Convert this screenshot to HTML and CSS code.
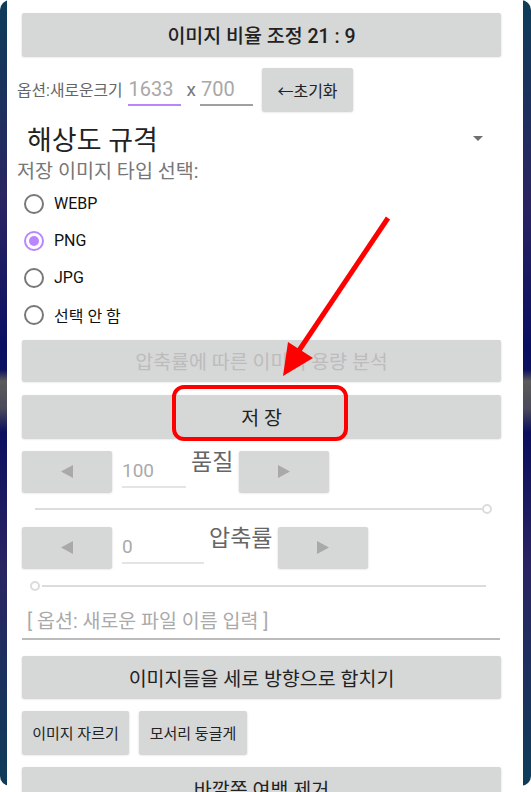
FILE: index.html
```html
<!DOCTYPE html>
<html>
  <head>
    <title>이미지 저장</title>
    <link rel="stylesheet" href="styles.css">
  </head>
  <body>
    <div class="screen">
      <div class="dialog">
        <div class="btn wide title-btn">이미지 비율 조정 21 : 9</div>

        <div class="size-row">
          <span class="size-label">옵션:새로운크기</span>
          <span class="field field-w">1633</span>
          <span class="times">x</span>
          <span class="field field-h">700</span>
          <span class="btn reset-btn">←초기화</span>
        </div>

        <div class="spinner">
          <span>해상도 규격</span>
          <svg width="10" height="5" viewBox="0 0 10 5"><polygon points="0,0 10,0 5,5" fill="#6f6f6f"/></svg>
        </div>

        <div class="type-label">저장 이미지 타입 선택:</div>
        <div class="radio-group">
          <div class="radio"><span class="circle"></span><span>WEBP</span></div>
          <div class="radio"><span class="circle checked"></span><span>PNG</span></div>
          <div class="radio"><span class="circle"></span><span>JPG</span></div>
          <div class="radio"><span class="circle"></span><span>선택 안 함</span></div>
        </div>

        <div class="btn wide analyze">압축률에 따른 이미지 용량 분석</div>
        <div class="btn wide save">저 장</div>

        <div class="step-row">
          <span class="btn step"><svg width="12" height="13" viewBox="0 0 12 13"><polygon points="12,0 12,13 0,6.5" fill="#a9a9a9"/></svg></span>
          <span class="step-value">100</span>
          <span class="step-label">품질</span>
          <span class="btn step"><svg width="12" height="13" viewBox="0 0 12 13"><polygon points="0,0 0,13 12,6.5" fill="#a9a9a9"/></svg></span>
        </div>
        <div class="slider slider-max"><span class="track"></span><span class="thumb"></span></div>

        <div class="step-row compress">
          <span class="btn step"><svg width="12" height="13" viewBox="0 0 12 13"><polygon points="12,0 12,13 0,6.5" fill="#a9a9a9"/></svg></span>
          <span class="step-value wide-value">0</span>
          <span class="step-label">압축률</span>
          <span class="btn step"><svg width="12" height="13" viewBox="0 0 12 13"><polygon points="0,0 0,13 12,6.5" fill="#a9a9a9"/></svg></span>
        </div>
        <div class="slider slider-min"><span class="thumb"></span><span class="track"></span></div>

        <div class="name-field">[ 옵션: 새로운 파일 이름 입력 ]</div>

        <div class="btn wide merge">이미지들을 세로 방향으로 합치기</div>
        <div class="small-row">
          <span class="btn small">이미지 자르기</span>
          <span class="btn small">모서리 둥글게</span>
        </div>
        <div class="btn wide last">바깥쪽 여백 제거</div>
      </div>
    </div>

    <!-- red annotation over the save button -->
    <svg class="annotation" width="531" height="792" viewBox="0 0 531 792">
      <line x1="388" y1="218" x2="298" y2="352" stroke="#ff0000" stroke-width="5"/>
      <polygon points="283,376 288,342 313,358" fill="#ff0000"/>
      <rect x="174" y="387" width="172" height="52" rx="10" fill="none" stroke="#ff0000" stroke-width="4"/>
    </svg>
  </body>
</html>
```

FILE: styles.css
```css
html,
body {
  margin: 0;
  height: 792px;
  overflow: hidden;
  background-color: #fff;
}

body {
  font-family: Roboto, "Noto Sans CJK KR", sans-serif;
  position: relative;
}

.screen {
  position: relative;
  height: 786px;
  border-radius: 10px;
  background: linear-gradient(180deg, #0e3d58 0%, #2a2462 26%, #0a0f62 44%, #0b1060 47%, #5b5b5b 48.5%, #4a4a5a 52%, #0b0f5e 55%, #2a2463 72%, #0e3d58 100%);
}

.dialog {
  position: relative;
  margin: 0 8px 0 7px;
  min-height: 820px;
  padding: 13px 17px 0 10px;
  background-color: #fff;
  display: flex;
  flex-direction: column;
}

.btn {
  display: flex;
  align-items: center;
  justify-content: center;
  background-color: #d6d7d7;
  border-radius: 2px;
  box-shadow: 0 1px 2px rgba(0, 0, 0, 0.22);
  color: #222;
  font-size: 19.5px;
}

.wide {
  flex: none;
  height: 43px;
  margin: 0 5px;
}

.title-btn {
  font-weight: 500;
}

.size-row {
  display: flex;
  align-items: center;
  height: 43px;
  margin-top: 12px;
}

.size-label {
  font-size: 15.8px;
  color: #666;
}

.field {
  box-sizing: border-box;
  width: 53px;
  height: 32px;
  line-height: 30px;
  padding-left: 1px;
  font-size: 20px;
  color: #a8a8a8;
  border-bottom: 2px solid #a0a0a0;
}

.field-w {
  margin-left: 5px;
  border-bottom-color: #bb86fc;
}

.times {
  margin-left: 6px;
  font-size: 19px;
  color: #777;
}

.field-h {
  margin-left: 4px;
}

.reset-btn {
  margin-left: 9px;
  width: 91px;
  height: 43px;
  font-size: 16px;
}

.spinner {
  display: flex;
  align-items: center;
  justify-content: space-between;
  height: 44px;
  margin-top: 5px;
  padding: 0 23px 0 10px;
  font-size: 27px;
  color: #222;
}

.type-label {
  font-size: 19.6px;
  line-height: 24px;
  color: #777;
}

.radio-group {
  margin-top: 1px;
}

.radio {
  display: flex;
  align-items: center;
  height: 37px;
  font-size: 16px;
  color: #111;
}

.circle {
  box-sizing: border-box;
  width: 20px;
  height: 20px;
  margin: 0 10px 0 7px;
  border: 2px solid #787878;
  border-radius: 50%;
  display: flex;
  align-items: center;
  justify-content: center;
}

.circle.checked {
  border-color: #bb86fc;
}

.circle.checked::after {
  content: "";
  width: 10px;
  height: 10px;
  border-radius: 50%;
  background-color: #bb86fc;
}

.analyze {
  margin-top: 7px;
  height: 41px;
  color: #bcbcbc;
}

.save {
  margin-top: 14px;
}

.step-row {
  display: flex;
  align-items: flex-start;
  height: 41px;
  margin: 13px 0 0 5px;
}

.step-row.compress {
  margin-top: 10px;
}

.step {
  width: 90px;
  height: 41px;
}

.step-value {
  box-sizing: border-box;
  width: 64px;
  height: 37px;
  margin-left: 10px;
  padding-top: 4px;
  line-height: 32px;
  font-size: 19px;
  color: #aaa;
  border-bottom: 2px solid #e4e4e4;
}

.step-value.wide-value {
  width: 82px;
}

.step-label {
  margin: 0 6px 0 5px;
  line-height: 24px;
  font-size: 23px;
  color: #666;
}

.slider {
  display: flex;
  align-items: center;
  height: 16px;
}

.slider-max {
  margin: 9px 14px 0 18px;
}

.slider-min {
  margin: 10px 20px 0 13px;
}

.track {
  flex: 1;
  height: 2px;
  background-color: #dcdcdc;
}

.thumb {
  box-sizing: border-box;
  width: 10px;
  height: 10px;
  border: 2px solid #dcdcdc;
  border-radius: 50%;
}

.slider-min .thumb {
  margin-right: 2px;
}

.name-field {
  box-sizing: border-box;
  height: 34px;
  margin: 12px 6px 0 5px;
  padding-left: 5px;
  line-height: 32px;
  font-size: 19.5px;
  color: #aaa;
  border-bottom: 2px solid #bbb;
}

.merge {
  margin-top: 16px;
  height: 42px;
}

.small-row {
  display: flex;
  gap: 10px;
  margin: 13px 5px 0;
}

.small {
  width: 107px;
  height: 43px;
  font-size: 15px;
}

.small + .small {
  width: 108px;
}

.last {
  margin-top: 13px;
}

.annotation {
  position: absolute;
  top: 0;
  left: 0;
  pointer-events: none;
}
```
